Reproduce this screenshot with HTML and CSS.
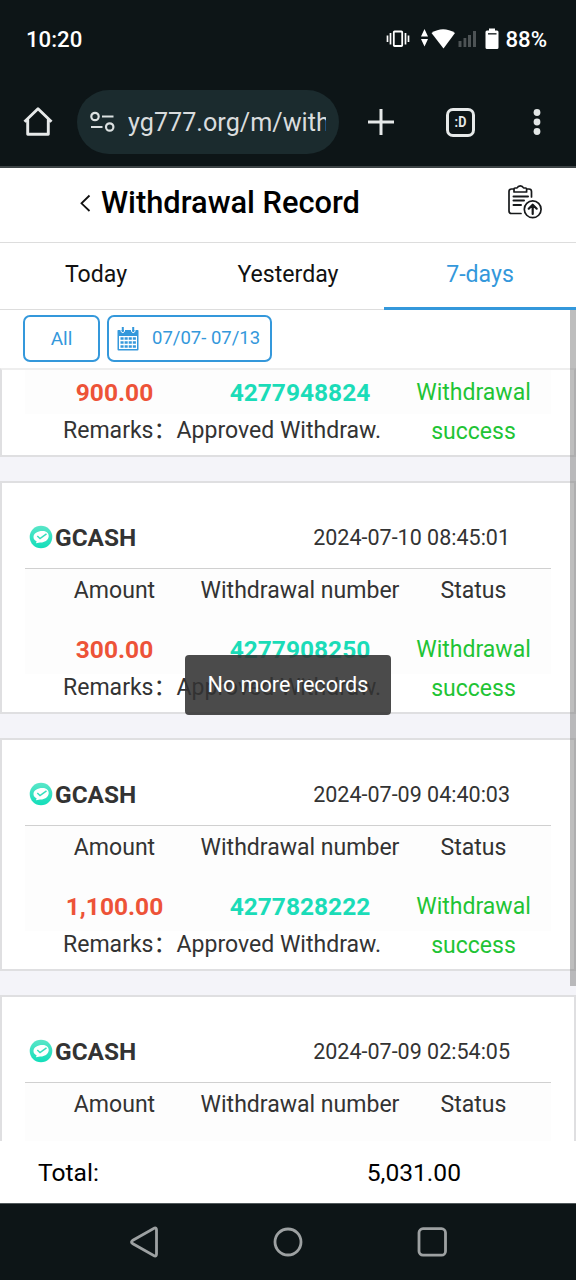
FILE: index.html
```html
<!DOCTYPE html>
<html lang="en">
<head>
<meta charset="utf-8">
<title>Withdrawal Record</title>
<link rel="stylesheet" href="styles.css">
</head>
<body>
<svg class="defs" width="0" height="0">
  <defs>
    <linearGradient id="mint" x1="0" y1="0" x2="0" y2="1"><stop offset="0" stop-color="#5ae6c8"/><stop offset="1" stop-color="#12deba"/></linearGradient>
    <symbol id="wallet" viewBox="0 0 24 24">
      <circle cx="12" cy="12" r="11.3" fill="url(#mint)"/>
      <path d="M4.500 12C4.500 8.500 8.500 6 13.500 6C18 6 20 8.500 19.700 11.500C19.300 15.500 15 17.800 11 17.500L7 18.300L7.600 16.300C5.500 15.500 4.500 14 4.500 12Z" fill="#fff"/>
      <path d="M8.300 11L11 13.500L17.500 8.800" fill="none" stroke="#35dfbd" stroke-width="1.500"/>
    </symbol>
  </defs>
</svg>
<header class="chrome">
  <div class="status">
    <span class="clock">10:20</span>
    <svg class="status-icons" width="116" height="24" viewBox="0 0 116 24">
      <g fill="none" stroke="#fff">
        <rect x="7.800" y="4.500" width="8.400" height="14.500" rx=".8" stroke-width="1.800"/>
        <path d="M4.500 6V17.500M19.500 6V17.500" stroke-width="1.700"/>
        <path d="M1.500 8.500V15M22.500 8.500V15" stroke-width="1.700"/>
      </g>
      <path d="M38.500 2L42 9.500H35ZM35 12H42L38.500 19.500Z" fill="#fff"/>
      <path d="M45.500 6Q57 -1.500 69 6L57.500 21.500Z" fill="#fff"/>
      <path d="M72.500 14H75.500V20H72.500ZM77.500 11H80.300V20H77.500ZM82 8H85V20H82ZM87 4H90V20H87Z" fill="#4d5355"/>
      <path d="M103 1.500H109V3.500H111Q112.500 3.500 112.500 5V20.500Q112.500 22 111 22H101Q99.500 22 99.500 20.500V5Q99.500 3.500 101 3.500H103Z" fill="#fff"/>
      <path d="M102 6.800H110.500" stroke="#3b4143" stroke-width="1.600"/>
    </svg>
    <span class="battery">88%</span>
  </div>
  <div class="toolbar">
    <svg class="home" width="30" height="30" viewBox="0 0 30 30"><path d="M1.500 14.800L15 1.800L28.500 14.800M4.700 12.500V27.200H25.300V12.500" fill="none" stroke="#e6e9e9" stroke-width="2.900" stroke-linejoin="round"/></svg>
    <div class="address">
      <svg width="25" height="22" viewBox="0 0 25 22"><g fill="none" stroke="#dce1e1" stroke-width="2.200"><circle cx="5" cy="5.500" r="3.700"/><path d="M12 5.500H23.500M1 16H12.500"/><circle cx="19.700" cy="16" r="3.700"/></g></svg>
      <span class="url">yg777.org/m/with</span>
    </div>
    <svg class="plus" width="26" height="26" viewBox="0 0 26 26"><path d="M13 0V26M0 13H26" stroke="#e6e9e9" stroke-width="3"/></svg>
    <div class="tabcount"><span>:D</span></div>
    <svg class="kebab" width="8" height="26" viewBox="0 0 8 26"><g fill="#e2e6e6"><circle cx="4" cy="3.500" r="3.400"/><circle cx="4" cy="13" r="3.400"/><circle cx="4" cy="22.500" r="3.400"/></g></svg>
  </div>
</header>
<main class="app">
  <div class="titlebar">
    <svg class="back" width="12" height="18" viewBox="0 0 12 18"><path d="M10.500 1.500L2.500 9.300L10.500 17" fill="none" stroke="#111" stroke-width="1.800"/></svg>
    <h1>Withdrawal Record</h1>
    <svg class="report" width="36" height="36" viewBox="0 0 36 36"><g fill="none" stroke="#17191b" stroke-width="1.700" stroke-linecap="round" stroke-linejoin="round">
      <path d="M14 28.500H4.500Q2 28.500 2 26V6.500Q2 4 4.500 4H6.500M20.500 4H22Q24.500 4 24.500 6.500V12"/>
      <path d="M7 7V4Q7 3 8 3H10Q11 .9 13.300 .9Q15.600 .9 16.600 3H18.600Q19.600 3 19.600 4V7Z"/>
      <path d="M6.500 11.500H21M6.500 15.500H17M6.500 20H14" stroke-width="2"/>
      <circle cx="25.700" cy="24.300" r="8.400"/>
      <path d="M25.700 29V20.500M21.700 23.700L25.700 19.700L29.700 23.700" stroke-width="2.200"/>
    </g></svg>
  </div>
  <nav class="tabs"><a>Today</a><a>Yesterday</a><a class="active">7-days</a></nav>
  <div class="filters">
    <div class="all">All</div>
    <div class="range">
      <svg width="22" height="24" viewBox="0 0 22 24"><path d="M1 3H21Q21.500 3 21.500 4V22.500Q21.500 23.500 20.500 23.500H1.500Q.5 23.500 .5 22.500V4Q.5 3 1 3Z" fill="#3498db"/><path d="M2 9H20V22H2Z" fill="#fff"/><path d="M4 1.500V4.500Q6 7 7.500 4.500V1.500M14.500 1.500V4.500Q16 7 18 4.500V1.500" stroke="#fff" stroke-width="1" fill="none"/><path d="M5.800 0V4M16.200 0V4" stroke="#3498db" stroke-width="2"/><path d="M3.500 11.500H19M3.500 15.500H19M3.500 19.500H19" stroke="#3498db" stroke-width="2.600" stroke-dasharray="3.100 1"/></svg>
      <span>07/07- 07/13</span>
    </div>
  </div>
  <section class="list">
    <article class="card clipped">
      <div class="record">
        <b class="amount">900.00</b><b class="number">4277948824</b><span class="state">Withdrawal success</span>
        <span class="remarks">Remarks：Approved Withdraw.</span>
      </div>
    </article>
    <article class="card">
      <div class="head"><svg width="24" height="24"><use href="#wallet"/></svg><b>GCASH</b><time>2024-07-10 08:45:01</time></div>
      <div class="labels"><span>Amount</span><span>Withdrawal number</span><span>Status</span></div>
      <div class="record">
        <b class="amount">300.00</b><b class="number">4277908250</b><span class="state">Withdrawal success</span>
        <span class="remarks">Remarks：Approved Withdraw.</span>
      </div>
    </article>
    <article class="card">
      <div class="head"><svg width="24" height="24"><use href="#wallet"/></svg><b>GCASH</b><time>2024-07-09 04:40:03</time></div>
      <div class="labels"><span>Amount</span><span>Withdrawal number</span><span>Status</span></div>
      <div class="record">
        <b class="amount">1,100.00</b><b class="number">4277828222</b><span class="state">Withdrawal success</span>
        <span class="remarks">Remarks：Approved Withdraw.</span>
      </div>
    </article>
    <article class="card last">
      <div class="head"><svg width="24" height="24"><use href="#wallet"/></svg><b>GCASH</b><time>2024-07-09 02:54:05</time></div>
      <div class="labels"><span>Amount</span><span>Withdrawal number</span><span>Status</span></div>
    </article>
  </section>
  <footer class="total"><span>Total:</span><span class="sum">5,031.00</span></footer>
  <div class="scrollbar"></div>
  <div class="toast">No more records</div>
</main>
<div class="navbar">
  <svg width="30" height="34" viewBox="0 0 30 34"><path d="M25.500 3Q27.500 2.500 27.500 5V29Q27.500 31.500 25.500 31L3.500 18.500Q1.500 17 3.500 15.500Z" fill="none" stroke="#9da1a2" stroke-width="2.800"/></svg>
  <svg width="30" height="34" viewBox="0 0 30 34"><circle cx="15" cy="17" r="13" fill="none" stroke="#9da1a2" stroke-width="2.800"/></svg>
  <svg width="30" height="34" viewBox="0 0 30 34"><rect x="2" y="3.700" width="26.500" height="26.500" rx="4" fill="none" stroke="#9da1a2" stroke-width="2.800"/></svg>
</div>
</body>
</html>
```
FILE: styles.css
```css
* { box-sizing: border-box; }
body { margin: 0; width: 576px; height: 1280px; overflow: hidden; display: flex; flex-direction: column; background: #fff; font-family: Roboto, "Noto Sans CJK SC", sans-serif; color: #333; }
svg { display: block; flex: none; }
.defs { position: absolute; }
.chrome { height: 168px; flex: none; background: #0d1517; border-bottom: 2px solid #3d4446; }
.status { height: 78px; display: flex; align-items: center; padding: 0 29px 0 26px; color: #fff; font-size: 22.200px; font-weight: 500; }
.clock { flex: 1; }
.status-icons { margin-right: 3px; }
.toolbar { height: 88px; display: flex; align-items: center; padding-left: 23px; }
.address { width: 262px; height: 64px; margin-left: 24px; border-radius: 32px; background: #1b2b2e; display: flex; align-items: center; padding-left: 13px; color: #d9dcdd; }
.url { margin-left: 13px; width: 198px; overflow: hidden; white-space: nowrap; font-size: 25.200px; line-height: 36px; padding-top: 2px; }
.plus { margin-left: 29px; }
.tabcount { margin-left: 52px; width: 29px; height: 29px; border: 3px solid #e6e9e9; border-radius: 7px; color: #e6e9e9; font-size: 15px; font-weight: 700; line-height: 22px; text-align: center; }
.tabcount span { display: block; transform: scaleX(.84); }
.kebab { margin-left: 58px; }
.app { position: relative; height: 1035px; flex: none; display: flex; flex-direction: column; }
.titlebar { height: 75px; flex: none; border-bottom: 1px solid #ddd; display: flex; align-items: center; padding: 0 33px 4px 79px; }
.titlebar h1 { margin: 0 0 0 10px; flex: 1; color: #000; font-size: 30.800px; font-weight: 500; line-height: 40px; }
.tabs { height: 67px; flex: none; display: grid; grid-template-columns: repeat(3, 1fr); text-align: center; font-size: 23.100px; line-height: 63px; color: #111; border-bottom: 1px solid #ddd; }
.tabs .active { height: 67px; color: #3498db; border-bottom: 3px solid #3498db; }
.filters { height: 58px; flex: none; display: flex; gap: 7px; padding: 5px 23px 6px; color: #3498db; }
.all, .range { border: 2px solid #3498db; border-radius: 7px; display: flex; align-items: center; }
.all { width: 77px; justify-content: center; font-size: 19px; }
.range { width: 165px; padding-left: 8px; font-size: 18.500px; }
.range span { margin-left: 13px; white-space: nowrap; padding-bottom: 2px; }
.list { height: 773px; flex: none; overflow: hidden; display: flex; flex-direction: column; gap: 24px; background: #f4f4f9; font-size: 23.040px; }
.card { height: 233px; flex: none; background: #fff; border: 2px solid #dfdfe1; padding: 0 23px; }
.clipped { height: 89px; border-top-color: #eee; }
.head { height: 86px; border-bottom: 1px solid #d0d0d0; display: flex; align-items: center; padding: 23px 41px 0 4px; }
.head b { margin-left: 2px; flex: 1; font-size: 24.400px; font-weight: 700; }
.head time { font-size: 21.500px; }
.labels, .record { display: grid; grid-template-columns: 179px 192px 155px; text-align: center; white-space: nowrap; background: #fdfdfd; }
.labels { height: 61px; line-height: 43px; }
.labels span { margin: 0 -10px; }
.record { grid-template-rows: 39px 37px; line-height: 39px; background: linear-gradient(#fdfdfd 44px, #fff 44px); }
.clipped .record { padding-top: 3px; }
.amount, .number { font-size: 24.500px; }
.amount { color: #ed5338; }
.number { color: #1bdcb8; }
.state { grid-column: 3; grid-row: 1 / 3; white-space: normal; padding: 0 15px; color: #1fc435; }
.remarks { grid-column: 1 / 3; text-align: left; padding-left: 38px; line-height: 37px; }
.total { height: 62px; flex: none; display: flex; padding: 1px 115px 0 38px; justify-content: space-between; align-items: center; font-size: 24.600px; color: #000; }
.scrollbar { position: absolute; right: 0; top: 142px; width: 6px; height: 676px; background: rgba(125,125,125,.5); }
.toast { position: absolute; left: 185px; top: 487px; width: 206px; height: 60px; border-radius: 4px; background: rgba(50,50,50,.88); color: #fff; font-size: 21.600px; line-height: 60px; text-align: center; white-space: nowrap; }
.navbar { flex: 1; background: #0d1517; border-top: 1px solid #50585a; display: flex; justify-content: center; align-items: center; gap: 114px; }
```
